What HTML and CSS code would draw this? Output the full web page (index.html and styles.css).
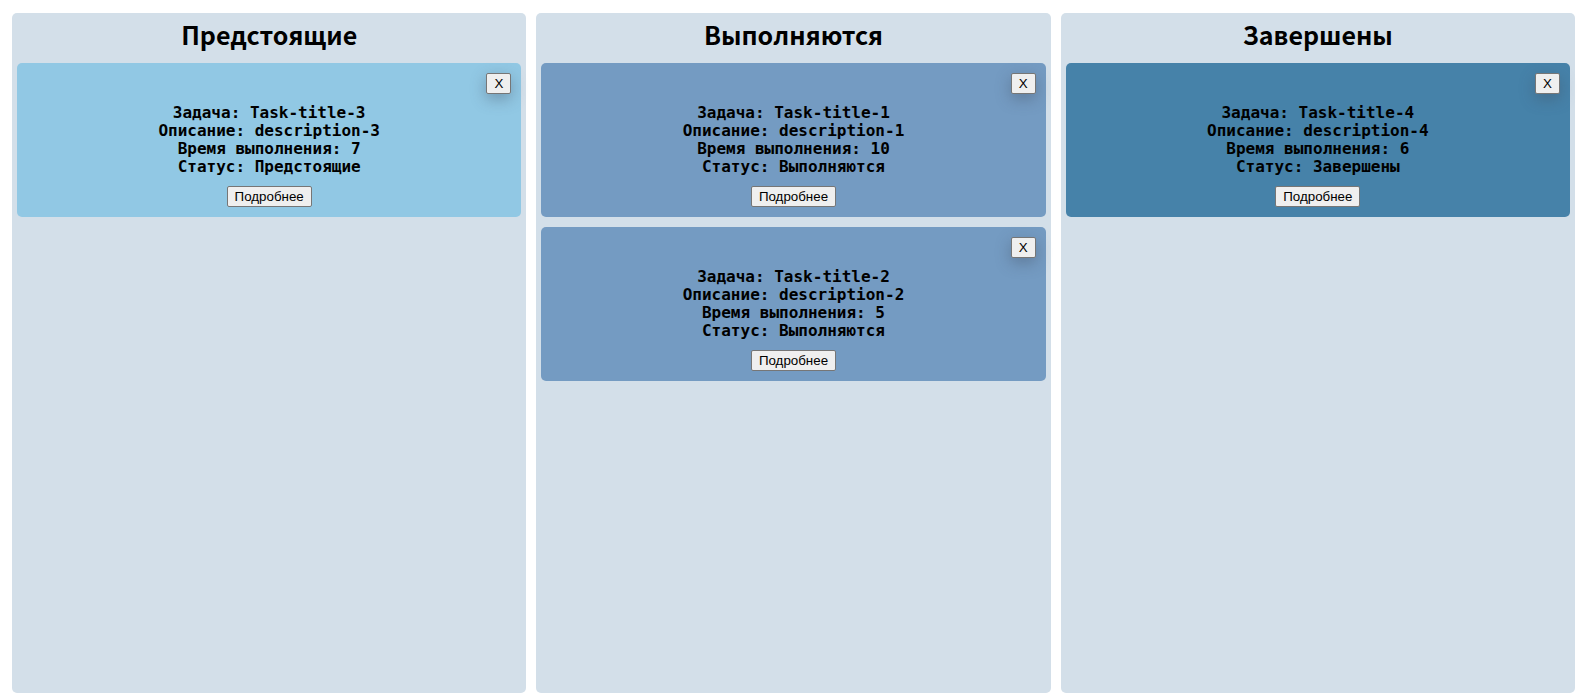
FILE: index.html
```html
<!DOCTYPE html>
<html lang="ru">
<head>
<meta charset="utf-8">
<title>Задачи</title>
<link rel="stylesheet" href="styles.css">
</head>
<body>
<main class="board">
  <section class="column">
    <h2 class="column-title">Предстоящие</h2>
    <article class="card upcoming">
      <button type="button" class="close">X</button>
      <div class="info">
        <p>Задача: Task-title-3</p>
        <p>Описание: description-3</p>
        <p>Время выполнения: 7</p>
        <p>Статус: Предстоящие</p>
      </div>
      <button type="button" class="more">Подробнее</button>
    </article>
  </section>
  <section class="column">
    <h2 class="column-title">Выполняются</h2>
    <article class="card active">
      <button type="button" class="close">X</button>
      <div class="info">
        <p>Задача: Task-title-1</p>
        <p>Описание: description-1</p>
        <p>Время выполнения: 10</p>
        <p>Статус: Выполняются</p>
      </div>
      <button type="button" class="more">Подробнее</button>
    </article>
    <article class="card active">
      <button type="button" class="close">X</button>
      <div class="info">
        <p>Задача: Task-title-2</p>
        <p>Описание: description-2</p>
        <p>Время выполнения: 5</p>
        <p>Статус: Выполняются</p>
      </div>
      <button type="button" class="more">Подробнее</button>
    </article>
  </section>
  <section class="column">
    <h2 class="column-title">Завершены</h2>
    <article class="card done">
      <button type="button" class="close">X</button>
      <div class="info">
        <p>Задача: Task-title-4</p>
        <p>Описание: description-4</p>
        <p>Время выполнения: 6</p>
        <p>Статус: Завершены</p>
      </div>
      <button type="button" class="more">Подробнее</button>
    </article>
  </section>
</main>
</body>
</html>
```
FILE: styles.css
```css
* {
  box-sizing: border-box;
}

body {
  margin: 0;
}

.board {
  display: grid;
  grid-template-columns: repeat(3, 1fr);
  gap: 10px;
  min-height: 100vh;
  padding: 13px 3px 3px 12px;
}

.column {
  display: flex;
  flex-direction: column;
  gap: 10px;
  padding: 5px;
  border-radius: 5px;
  background: #d3dfe9;
}

.column-title {
  margin: 0;
  padding-bottom: 2px;
  font: bold 25px/33px "Noto Sans CJK JP", sans-serif;
  text-align: center;
}

.card {
  display: flex;
  flex-direction: column;
  align-items: center;
  gap: 10px;
  padding: 10px;
  border-radius: 5px;
}

.upcoming {
  background: #91c8e4;
}

.active {
  background: #749bc2;
}

.done {
  background: #4682a9;
}

.info {
  font: bold 16px/18px "DejaVu Sans Mono", monospace;
  text-align: center;
}

.info p {
  margin: 0;
}

.close,
.more {
  padding: 0 7px;
  border: 1px solid #767676;
  border-radius: 2px;
  background: #efefef;
  color: #000;
  font-family: "Liberation Sans", Arial, sans-serif;
  line-height: 19px;
}

.close {
  align-self: flex-end;
  box-shadow: 0 5px 15px rgba(65, 75, 95, 0.4);
}
```
